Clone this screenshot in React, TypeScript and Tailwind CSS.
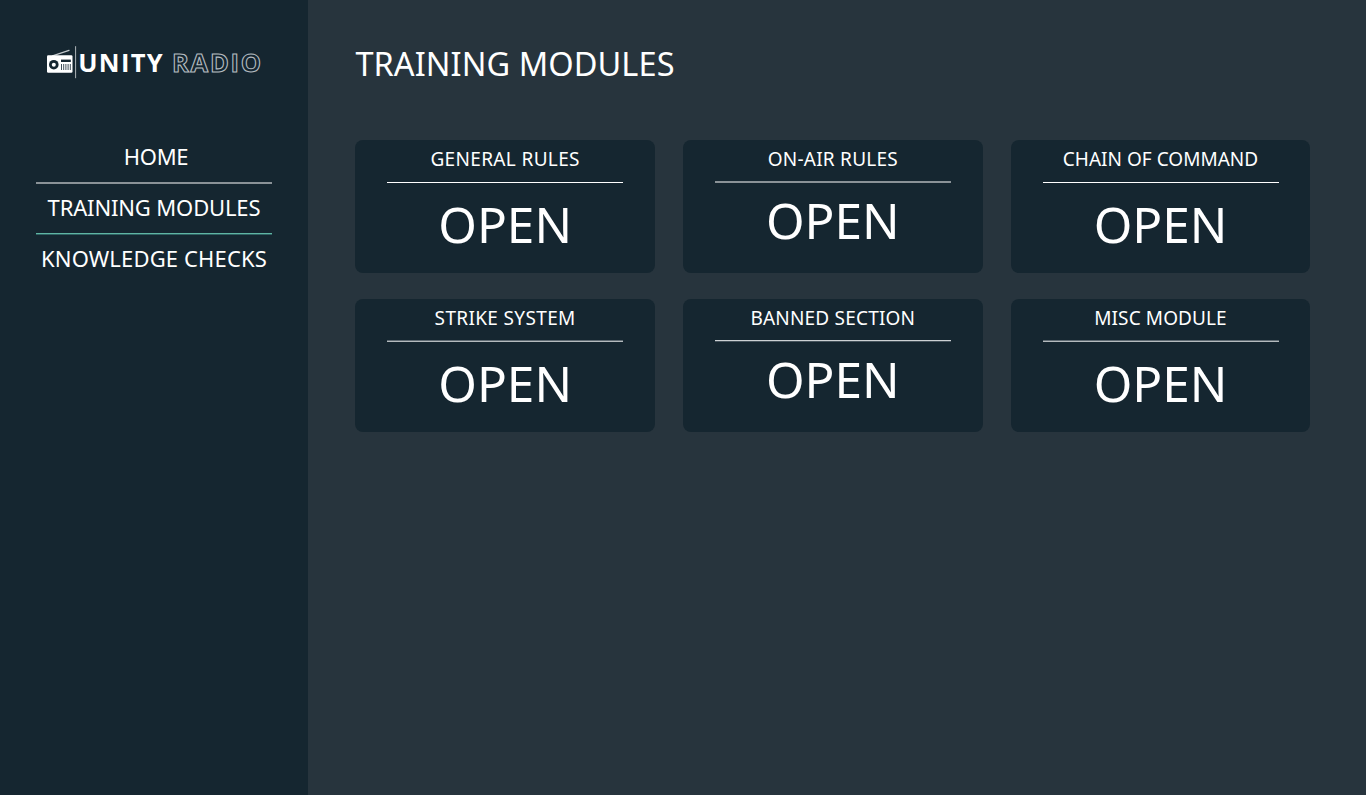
const cards = [
  { title: "GENERAL RULES", tracking: "tracking-[0.35px]", rule: "bg-white h-px mb-px", raised: false },
  { title: "ON-AIR RULES", tracking: "tracking-[0.25px]", rule: "bg-[#8a9297] h-0.5 -mt-px mb-px", raised: true },
  { title: "CHAIN OF COMMAND", tracking: "tracking-[0.02px]", rule: "bg-white h-px mb-px", raised: false },
  { title: "STRIKE SYSTEM", tracking: "tracking-[0.35px]", rule: "bg-[#b4babd] border-t border-[#5f6b73] h-0.5 -mt-px mb-px", raised: false },
  { title: "BANNED SECTION", tracking: "tracking-[0.2px]", rule: "bg-[#46545d] border-t border-[#cdd1d4] h-0.5 -mt-px mb-px", raised: true },
  { title: "MISC MODULE", tracking: "tracking-[0.1px]", rule: "bg-[#b4babd] border-t border-[#5f6b73] h-0.5 -mt-px mb-px", raised: false },
];

function Logo() {
  return (
    <svg className="block h-[44px] w-[226px] overflow-visible" viewBox="0 -5 226 44" aria-label="Unity Radio">
      <path d="M6.5 10.8 23 5.3" stroke="#c3c9cc" strokeWidth="1.3" strokeLinecap="round" />
      <rect x="1" y="10.3" width="25.5" height="17.4" rx="1.2" fill="#fff" />
      <circle cx="7.8" cy="19.7" r="4.8" fill="#152630" />
      <circle cx="7.8" cy="19.7" r="2" fill="#fff" />
      <rect x="15" y="14.6" width="9.8" height="2.4" fill="#152630" />
      <path d="M15.5 19v6M17.7 19v6M19.9 19v6M22.1 19v6M24.3 19v6" stroke="#42505a" strokeWidth="1" />
      <path d="M29.6 1.2v32" stroke="#aeb5b9" strokeWidth="1" />
      <text x="32.2" y="26.5" fontFamily="Open Sans" fontSize="25.5" fontWeight="700" fill="#fff" textLength="84.5" lengthAdjust="spacing">
        UNITY
      </text>
      <text x="126" y="26.7" fontFamily="Open Sans" fontSize="25.5" fontWeight="700" fill="none" stroke="#b4bcc0" strokeWidth="1.1" textLength="89" lengthAdjust="spacing">
        RADIO
      </text>
    </svg>
  );
}

export default function App() {
  return (
    <div className="flex h-[795px] w-full bg-[#27343d] font-['Noto_Sans',sans-serif] font-[370] text-white">
      <aside className="w-[308px] shrink-0 bg-[#152630] px-9 pt-[40px]">
        <div className="pl-2.5">
          <Logo />
        </div>
        <nav className="mt-[48px] flex flex-col text-center text-[22px]">
          <a className="h-[50px] pl-1 leading-[49px] tracking-[-0.3px]">HOME</a>
          <div className="h-0.5 bg-[#8a9297]" />
          <a className="h-[49px] leading-[47px] tracking-[-0.15px]">TRAINING MODULES</a>
          <div className="h-0.5 border-t border-[#5fb5a3] bg-[#2f6263]" />
          <a className="h-[50px] whitespace-nowrap leading-[47px] tracking-[0.15px]">KNOWLEDGE CHECKS</a>
        </nav>
      </aside>
      <main className="pl-[47.4px] pt-[41px]">
        <h1 className="h-[99px] text-[32.5px] leading-[46px] tracking-[0.08px]">TRAINING MODULES</h1>
        <div className="grid grid-cols-[repeat(3,299.5px)] gap-x-[28.2px] gap-y-[26px]">
          {cards.map((c) => (
            <section key={c.title} className="h-[133px] rounded-lg bg-[#152630] px-[31.75px] text-center">
              <h2 className={`h-[42px] whitespace-nowrap text-[19px] leading-[39px] ${c.tracking}`}>{c.title}</h2>
              <div className={c.rule} />
              <p className={c.raised ? "text-[49.5px] leading-[73px]" : "text-[49.5px] leading-[81px]"}>OPEN</p>
            </section>
          ))}
        </div>
      </main>
    </div>
  );
}
